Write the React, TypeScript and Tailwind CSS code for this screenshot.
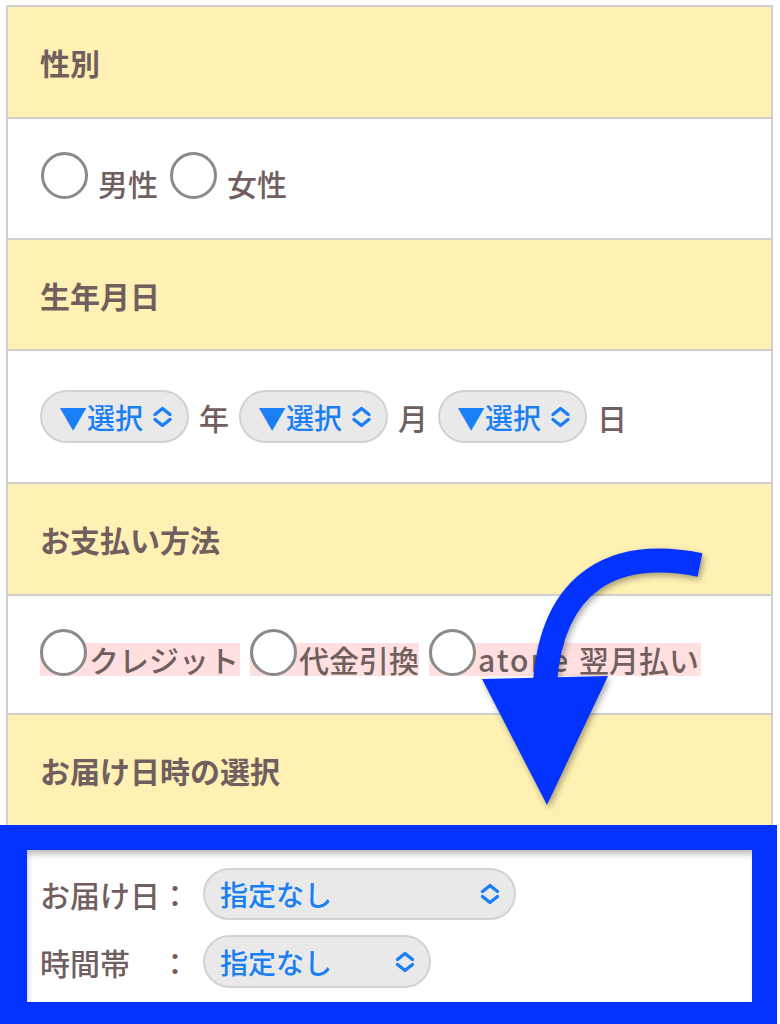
import React from "react";

const Chevrons = ({ w = 20, h = 22 }: { w?: number; h?: number }) => (
  <svg width={w} height={h} viewBox="0 0 20 22" fill="none" stroke="#1a7ff5" strokeWidth="3.4" strokeLinecap="round" strokeLinejoin="round">
    <path d="M2.5 8.5 L10 2.5 L17.5 8.5" />
    <path d="M2.5 13.5 L10 19.5 L17.5 13.5" />
  </svg>
);

const Radio = () => (
  <span className="block h-[47px] w-[47px] shrink-0 rounded-full border-[3px] border-[#8a8a8a] bg-white" />
);

const Header = ({ children, h }: { children: React.ReactNode; h: string }) => (
  <div className={`flex items-center border-b-2 border-[#d0d0d0] bg-[#fff0b3] pl-[32px] ${h}`}>
    <span className="text-[30px] font-bold leading-[36px] text-[#715f5f]">{children}</span>
  </div>
);

const DateSelect = () => (
  <div className="flex h-[53px] w-[149px] items-center justify-between rounded-full border-2 border-[#d2d2d2] bg-[#e9e9e9] pl-[17px] pr-[14px]">
    <span className="text-[28px] font-medium leading-none text-[#1a7ff5]">▼選択</span>
    <Chevrons w={21} h={22} />
  </div>
);

const PayOption = ({ children, w }: { children: React.ReactNode; w: string }) => (
  <div className={`flex h-[33px] items-end bg-[#ffdfe0] ${w}`}>
    <Radio />
    <span className="ml-[2px] whitespace-nowrap text-[30px] font-medium leading-[33px] text-[#715f5f]">{children}</span>
  </div>
);

export default function App() {
  return (
    <div className="relative h-[1024px] w-[780px] overflow-hidden bg-white font-['Noto_Sans_CJK_JP',sans-serif]">
      <div className="ml-[6px] mt-[5px] w-[767px] border-x-2 border-t-2 border-[#d0d0d0]">
        <Header h="h-[112px]">性別</Header>
        <div className="flex h-[121px] items-end border-b-2 border-[#d0d0d0] bg-white pb-[39px] pl-[33px]">
          <Radio />
          <span className="mb-[1px] ml-[10px] text-[30px] font-medium leading-[30px] text-[#715f5f]">男性</span>
          <span className="ml-[12px]">
            <Radio />
          </span>
          <span className="mb-[1px] ml-[10px] text-[30px] font-medium leading-[30px] text-[#715f5f]">女性</span>
        </div>
        <Header h="h-[111px]">生年月日</Header>
        <div className="flex h-[133px] items-center gap-[10px] border-b-2 border-[#d0d0d0] bg-white pl-[32px]">
          <DateSelect />
          <span className="text-[30px] font-medium leading-none text-[#715f5f]">年</span>
          <DateSelect />
          <span className="text-[30px] font-medium leading-none text-[#715f5f]">月</span>
          <DateSelect />
          <span className="text-[30px] font-medium leading-none text-[#715f5f]">日</span>
        </div>
        <Header h="h-[112px]">お支払い方法</Header>
        <div className="flex h-[119px] items-end gap-[10px] border-b-2 border-[#d0d0d0] bg-white pb-[37px] pl-[32px]">
          <PayOption w="w-[200px]">クレジット</PayOption>
          <PayOption w="w-[169px]">代金引換</PayOption>
          <PayOption w="w-[272px]">
            <span className="tracking-[2px]">atone </span>翌月払い
          </PayOption>
        </div>
        <div className="flex h-[110px] items-center bg-[#fff0b3] pl-[32px]">
          <span className="text-[30px] font-bold leading-[36px] text-[#715f5f]">お届け日時の選択</span>
        </div>
      </div>

      <div className="w-[777px] border-b-[25px] border-l-[27px] border-r-[25px] border-t-[25px] border-[#0433ff] bg-white">
        <div className="flex flex-col gap-[15px] pb-[14px] pl-[13px] pt-[18px] shadow-[inset_2px_6px_6px_-2px_rgba(0,0,0,0.28)]">
          <div className="flex items-center">
            <span className="w-[163px] text-[30px] font-medium leading-none text-[#715f5f]">お届け日：</span>
            <div className="flex h-[52px] w-[313px] items-center justify-between rounded-full border-2 border-[#d2d2d2] bg-[#e9e9e9] pl-[15px] pr-[14px]">
              <span className="text-[28px] font-medium leading-none text-[#1a7ff5]">指定なし</span>
              <Chevrons />
            </div>
          </div>
          <div className="flex items-center">
            <span className="w-[163px] text-[30px] font-medium leading-none text-[#715f5f]">時間帯　：</span>
            <div className="flex h-[53px] w-[228px] items-center justify-between rounded-full border-2 border-[#d2d2d2] bg-[#e9e9e9] pl-[15px] pr-[14px]">
              <span className="text-[28px] font-medium leading-none text-[#1a7ff5]">指定なし</span>
              <Chevrons />
            </div>
          </div>
        </div>
      </div>

      <svg
        className="pointer-events-none absolute left-0 top-0"
        width="780"
        height="1024"
        viewBox="0 0 780 1024"
        style={{ filter: "drop-shadow(2px 3px 3px rgba(0,0,0,0.35))" }}
      >
        <path d="M700 565 C615 548 553 580 545 682" fill="none" stroke="#0433ff" strokeWidth="24" />
        <path d="M482 679 L608 676 L547 805 Z" fill="#0433ff" />
      </svg>
    </div>
  );
}
